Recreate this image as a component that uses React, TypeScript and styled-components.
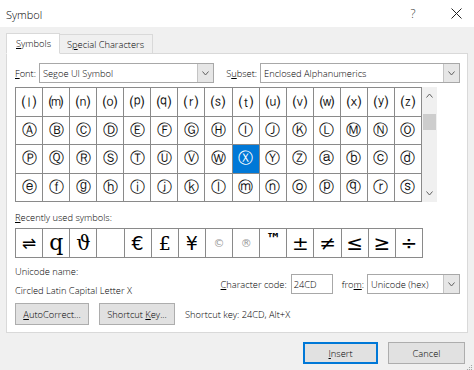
import React from "react";
import styled, { createGlobalStyle } from "styled-components";

const GlobalStyle = createGlobalStyle`
  html, body { margin: 0; padding: 0; }
  body {
    background: #f0f0f0;
    font-family: "Open Sans", "Noto Sans", sans-serif;
    font-size: 9.3px;
    font-weight: 300;
    color: #000;
    width: 474px;
    height: 370px;
    overflow: hidden;
  }
`;

const Window = styled.div`
  width: 474px;
  height: 370px;
  display: flex;
  flex-direction: column;
  background: #f0f0f0;
  position: relative;
  overflow: hidden;
`;

const TitleBar = styled.div`
  height: 27px;
  background: #fff;
  display: flex;
  align-items: center;
  padding: 0 8px 0 6px;
  font-size: 11px;
`;

const Title = styled.div`
  flex: 1;
  padding-top: 1px;
`;

const TitleIcon = styled.div<{ $w: number }>`
  width: ${(p) => p.$w}px;
  height: 27px;
  display: flex;
  align-items: center;
  justify-content: center;
  font-size: 12px;
  color: #333;
`;

const Body = styled.div`
  padding: 6px 6px 0 6px;
  display: flex;
  flex-direction: column;
`;

const TabBar = styled.div`
  display: flex;
  align-items: flex-end;
  height: 21px;
  position: relative;
  z-index: 1;
  margin-bottom: -1px;
`;

const Tab = styled.div<{ $active?: boolean }>`
  height: ${(p) => (p.$active ? 21 : 19)}px;
  box-sizing: border-box;
  display: flex;
  align-items: center;
  padding: ${(p) => (p.$active ? "0 8px 0 9px" : "0 8px 0 7px")};
  background: ${(p) => (p.$active ? "#fff" : "#f0f0f0")};
  border: 1px solid #d9d9d9;
  border-bottom: ${(p) => (p.$active ? "1px solid #fff" : "1px solid #d9d9d9")};
  ${(p) => (!p.$active ? "border-left: none; margin-bottom: 1px; border-bottom: none;" : "")}
`;

const Panel = styled.div`
  background: #fff;
  border: 1px solid #d9d9d9;
  width: 462px;
  box-sizing: border-box;
  padding: 9px 7px 7px 8px;
  display: flex;
  flex-direction: column;
`;

const FieldRow = styled.div`
  display: flex;
  align-items: center;
  height: 20px;
`;

const Label = styled.span<{ $ml?: number; $mr?: number }>`
  margin-left: ${(p) => p.$ml ?? 0}px;
  margin-right: ${(p) => p.$mr ?? 0}px;
  white-space: nowrap;
`;

const Key = styled.span`
  text-decoration: underline;
  text-underline-offset: 1px;
`;

const Combo = styled.div<{ $w: number }>`
  width: ${(p) => p.$w}px;
  height: 20px;
  box-sizing: border-box;
  border: 1px solid #a8a8a8;
  display: flex;
  align-items: stretch;
  background: #fff;
`;

const ComboText = styled.div`
  flex: 1;
  display: flex;
  align-items: center;
  padding-left: 3px;
`;

const ComboButton = styled.div`
  width: 15px;
  background: #e6e6e6;
  border-left: 1px solid #c4c4c4;
  display: flex;
  align-items: center;
  justify-content: center;
`;

const GridWrap = styled.div`
  display: flex;
  margin-top: 4px;
  height: 115px;
`;

const SymbolGrid = styled.div<{ $rows: number; $h: number; $w: number }>`
  width: ${(p) => p.$w}px;
  height: ${(p) => p.$h}px;
  box-sizing: border-box;
  display: grid;
  grid-template-columns: repeat(15, 1fr);
  grid-template-rows: repeat(${(p) => p.$rows}, 1fr);
  gap: 1px;
  padding: 1px;
  background: #8a8a8a;
`;

const Cell = styled.div<{ $selected?: boolean; $size?: number }>`
  background: ${(p) => (p.$selected ? "#0078d7" : "#fff")};
  color: ${(p) => (p.$selected ? "#fff" : "#111")};
  display: flex;
  align-items: center;
  justify-content: center;
  font-family: "DejaVu Sans", sans-serif;
  font-weight: 400;
  font-size: ${(p) => p.$size ?? 14}px;
  line-height: 1;
  overflow: hidden;
`;

const RecentCell = styled.div<{ $size: number; $color?: string; $family?: string; $top?: boolean; $weight?: number }>`
  background: #fff;
  color: ${(p) => p.$color ?? "#000"};
  display: flex;
  align-items: ${(p) => (p.$top ? "flex-start" : "center")};
  padding-top: ${(p) => (p.$top ? 3 : 0)}px;
  justify-content: center;
  font-family: ${(p) => p.$family ?? '"DejaVu Sans", sans-serif'};
  font-size: ${(p) => p.$size}px;
  font-weight: ${(p) => p.$weight ?? 400};
  line-height: 1;
  overflow: hidden;
`;

const ScrollBar = styled.div`
  width: 15px;
  background: #f0f0f0;
  display: flex;
  flex-direction: column;
  align-items: center;
`;

const ScrollArrow = styled.div`
  height: 17px;
  width: 15px;
  display: flex;
  align-items: center;
  justify-content: center;
`;

const ScrollTrack = styled.div`
  flex: 1;
  width: 13px;
  display: flex;
  flex-direction: column;
`;

const ScrollThumb = styled.div`
  margin-top: 10px;
  height: 16px;
  width: 13px;
  background: #cdcdcd;
`;

const SectionLabel = styled.div`
  margin-top: 9px;
  line-height: 14px;
`;

const RecentWrap = styled.div`
  margin-top: 3px;
`;

const InfoRow = styled.div`
  display: flex;
  margin-top: 7px;
  height: 33px;
`;

const InfoLeft = styled.div`
  display: flex;
  flex-direction: column;
  flex: 1;
`;

const InfoText = styled.div<{ $mt?: number }>`
  line-height: 14px;
  margin-top: ${(p) => p.$mt ?? 0}px;
`;

const InfoRight = styled.div`
  display: flex;
  align-items: center;
  margin-top: 9px;
  height: 20px;
`;

const CodeInput = styled.div`
  width: 42px;
  height: 20px;
  box-sizing: border-box;
  border: 1px solid #a8a8a8;
  display: flex;
  align-items: center;
  padding-left: 2px;
`;

const ButtonRow = styled.div`
  display: flex;
  align-items: center;
  margin-top: 5px;
  gap: 10px;
`;

const Button = styled.div<{ $w: number; $primary?: boolean }>`
  width: ${(p) => p.$w}px;
  height: 22px;
  box-sizing: border-box;
  background: #e1e1e1;
  border: 1px solid ${(p) => (p.$primary ? "#0078d7" : "#adadad")};
  ${(p) => (p.$primary ? "box-shadow: inset 0 0 0 1px #0078d7;" : "")}
  display: flex;
  align-items: center;
  justify-content: center;
`;

const Footer = styled.div`
  display: flex;
  justify-content: flex-end;
  gap: 10px;
  margin-top: 9px;
  padding-right: 3px;
`;

const Grip = styled.div`
  position: absolute;
  right: 1px;
  bottom: 1px;
  width: 8px;
  height: 8px;
`;

const Chevron = ({ up }: { up?: boolean }) => (
  <svg width="7" height="5" viewBox="0 0 7 5">
    <polyline
      points={up ? "0.5,4.5 3.5,1 6.5,4.5" : "0.5,0.5 3.5,4 6.5,0.5"}
      fill="none"
      stroke="#606060"
      strokeWidth="1"
    />
  </svg>
);

const codes = Array.from({ length: 60 }, (_, i) => 0x24a7 + i);
const SELECTED = 0x24cd;

type Recent = { ch: string; size: number; color?: string; family?: string; top?: boolean; weight?: number };
const serif = '"DejaVu Serif", "Liberation Serif", serif';
const recent: Recent[] = [
  { ch: "⇌", size: 17 },
  { ch: "q", size: 22, family: serif },
  { ch: "ϑ", size: 20, family: serif },
  { ch: "", size: 18 },
  { ch: "€", size: 19 },
  { ch: "£", size: 19, family: serif },
  { ch: "¥", size: 19 },
  { ch: "©", size: 11, color: "#9a9a9a" },
  { ch: "®", size: 11, color: "#9a9a9a" },
  { ch: "™", size: 15, top: true, weight: 700 },
  { ch: "±", size: 20 },
  { ch: "≠", size: 20 },
  { ch: "≤", size: 20 },
  { ch: "≥", size: 20 },
  { ch: "÷", size: 20 },
];

export default function App() {
  return (
    <Window>
      <GlobalStyle />
      <TitleBar>
        <Title>Symbol</Title>
        <TitleIcon $w={20}>?</TitleIcon>
        <TitleIcon $w={24} />
        <TitleIcon $w={19}>
          <svg width="11" height="11" viewBox="0 0 11 11">
            <path d="M0.5 0.5 L10.5 10.5 M10.5 0.5 L0.5 10.5" stroke="#222" strokeWidth="1" />
          </svg>
        </TitleIcon>
      </TitleBar>
      <Body>
        <TabBar>
          <Tab $active>
            <span>
              <Key>S</Key>ymbols
            </span>
          </Tab>
          <Tab>
            <span>
              S<Key>p</Key>ecial Characters
            </span>
          </Tab>
        </TabBar>
        <Panel>
          <FieldRow>
            <Label $mr={3}>
              <Key>F</Key>ont:
            </Label>
            <Combo $w={177}>
              <ComboText>Segoe UI Symbol</ComboText>
              <ComboButton>
                <Chevron />
              </ComboButton>
            </Combo>
            <Label $ml={12} $mr={3}>
              S<Key>u</Key>bset:
            </Label>
            <Combo $w={202}>
              <ComboText>Enclosed Alphanumerics</ComboText>
              <ComboButton>
                <Chevron />
              </ComboButton>
            </Combo>
          </FieldRow>
          <GridWrap>
            <SymbolGrid $rows={4} $h={115} $w={407}>
              {codes.map((c) => (
                <Cell key={c} $selected={c === SELECTED} $size={c < 0x24b6 ? 14 : 15}>
                  {String.fromCodePoint(c)}
                </Cell>
              ))}
            </SymbolGrid>
            <ScrollBar>
              <ScrollArrow>
                <Chevron up />
              </ScrollArrow>
              <ScrollTrack>
                <ScrollThumb />
              </ScrollTrack>
              <ScrollArrow>
                <Chevron />
              </ScrollArrow>
            </ScrollBar>
          </GridWrap>
          <SectionLabel>
            <Key>R</Key>ecently used symbols:
          </SectionLabel>
          <RecentWrap>
            <SymbolGrid $rows={1} $h={30} $w={408}>
              {recent.map((r, i) => (
                <RecentCell
                  key={i}
                  $size={r.size}
                  $color={r.color}
                  $family={r.family}
                  $top={r.top}
                  $weight={r.weight}
                >
                  {r.ch}
                </RecentCell>
              ))}
            </SymbolGrid>
          </RecentWrap>
          <InfoRow>
            <InfoLeft>
              <InfoText>Unicode name:</InfoText>
              <InfoText $mt={5}>Circled Latin Capital Letter X</InfoText>
            </InfoLeft>
            <InfoRight>
              <Label $mr={4}>
                <Key>C</Key>haracter code:
              </Label>
              <CodeInput>24CD</CodeInput>
              <Label $ml={9} $mr={3}>
                fro<Key>m</Key>:
              </Label>
              <Combo $w={93}>
                <ComboText>Unicode (hex)</ComboText>
                <ComboButton>
                  <Chevron />
                </ComboButton>
              </Combo>
            </InfoRight>
          </InfoRow>
          <ButtonRow>
            <Button $w={74}>
              <span>
                <Key>A</Key>utoCorrect...
              </span>
            </Button>
            <Button $w={76}>
              <span>
                Shortcut <Key>K</Key>ey...
              </span>
            </Button>
            <Label>Shortcut key: 24CD, Alt+X</Label>
          </ButtonRow>
        </Panel>
        <Footer>
          <Button $w={75} $primary>
            <span>
              <Key>I</Key>nsert
            </span>
          </Button>
          <Button $w={77}>Cancel</Button>
        </Footer>
      </Body>
      <Grip>
        <svg width="8" height="8" viewBox="0 0 8 8">
          <circle cx="6.5" cy="2.5" r="0.6" fill="#999" />
          <circle cx="4.5" cy="4.5" r="0.6" fill="#999" />
          <circle cx="6.5" cy="4.5" r="0.6" fill="#999" />
          <circle cx="2.5" cy="6.5" r="0.6" fill="#999" />
          <circle cx="4.5" cy="6.5" r="0.6" fill="#999" />
          <circle cx="6.5" cy="6.5" r="0.6" fill="#999" />
        </svg>
      </Grip>
    </Window>
  );
}
